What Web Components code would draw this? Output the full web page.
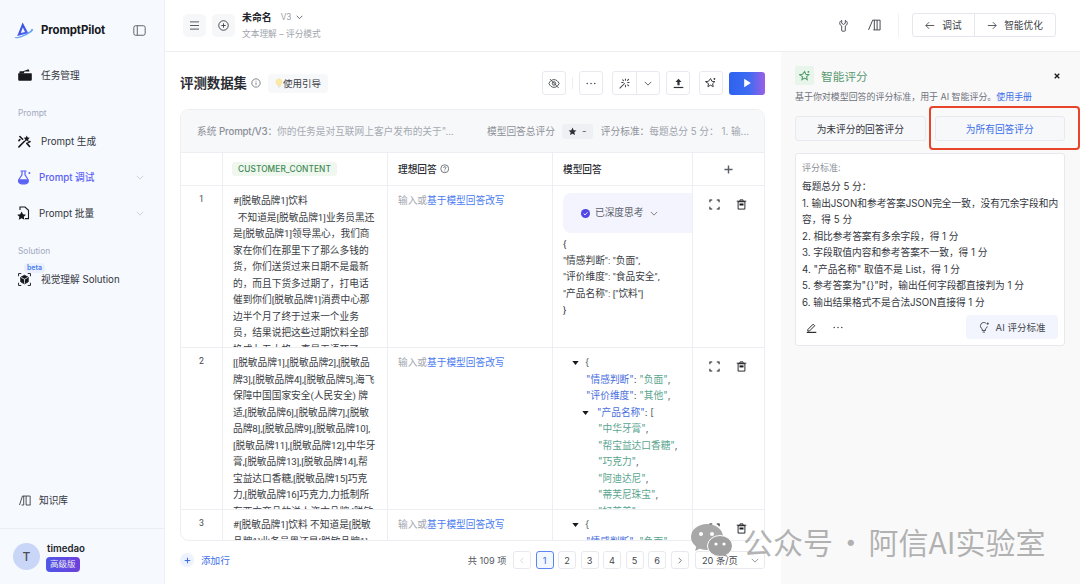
<!DOCTYPE html>
<html lang="zh"><head><meta charset="utf-8"><title>PromptPilot</title>
<style>
html,body{margin:0;padding:0;width:1080px;height:584px;overflow:hidden;background:#fff;font-family:Inter,"Noto Sans CJK SC",sans-serif;font-size:9.7px;color:#33363d}
</style></head><body><pp-app></pp-app>
<script>
const ICONS={
logo:`<svg viewBox="0 0 20 17" width="20" height="17"><defs><linearGradient id="lg" x1="0" y1="0" x2="1" y2="1"><stop offset="0" stop-color="#2b45d6"/><stop offset="1" stop-color="#5a6cf2"/></linearGradient></defs><path d="M8.600 .6 14.400 11.200 3.200 14Z" fill="url(#lg)"/><path d="M8.800 5.600 11 9.900 6.800 10.900Z" fill="#f6f9fe"/><path d="M.8 15.200C.4 16.400 3 16.600 7.400 15.200 12 13.700 17.600 10.600 19 8.200 19.500 7.300 18.600 6.800 17 7 18 7.600 16.800 9 13.400 11 9 13.500 3.400 15.600.8 15.200Z" fill="#62a2f4"/></svg>`,
panel:`<svg viewBox="0 0 14 12" width="13" height="11" fill="none" stroke="#55585f" stroke-width="1"><rect x=".8" y=".8" width="12.4" height="10.4" rx="2"/><path d="M4.600 1v10"/></svg>`,
folder:`<svg viewBox="0 0 14 12" width="14" height="12"><path d="M1.400 4.400V3.200C1.400 2.600 1.800 2.200 2.400 2.200H5L9.800 .4c.5-.2 1 .1 1.200.6l.5 1.400h-5L5.600 4.400Z" fill="#17181c"/><path d="M.5 4.200h12.800c.3 0 .5.2.5.5v5.800c0 .8-.6 1.300-1.300 1.300H1.600c-.8 0-1.400-.6-1.400-1.300V4.500c0-.2.1-.3.3-.3Z" fill="#17181c"/></svg>`,
wand:`<svg viewBox="0 0 14 14" width="13" height="13"><path d="M9.400.6l1 2.100 2.300.3-1.700 1.600.4 2.300-2-1.100-2 1.100.4-2.300L6.100 3l2.300-.3Z" fill="#17181c"/><path d="M1 12.800 7 6.700M2 1.600l3 3M9.500 9l3 3.300M2 5l-1 1M11 8l2-1" stroke="#17181c" stroke-width="1.700" fill="none" stroke-linecap="round"/></svg>`,
flask:`<svg viewBox="0 0 14 15" width="14" height="15"><path d="M4 1h5M5 1v3.800L1.900 9.500C.9 11.300 2 13.800 4.300 13.800h4.300c2.300 0 3.400-2.500 2.400-4.300L8 4.800V1" fill="none" stroke="#5b62f4" stroke-width="1.200" stroke-linecap="round"/><path d="M1.900 9.300h9.100c.8 2-.4 4.500-2.400 4.500H4.300C2.300 13.800 1.100 11.300 1.900 9.300Z" fill="#5b62f4"/><circle cx="12.400" cy="3" r="1" fill="#5b62f4"/></svg>`,
filestar:`<svg viewBox="0 0 13 14" width="13" height="14"><path d="M3 4V1h5l3.500 3.300V12.600H8" fill="none" stroke="#17181c" stroke-width="1.100"/><path d="M4.600 5.500l1.400 2.800 3 .4-2.200 2.100.6 3-2.800-1.500-2.800 1.500.6-3L.2 8.700l3-.4Z" fill="#17181c"/></svg>`,
cube:`<svg viewBox="0 0 14 14" width="13" height="13" fill="none" stroke="#17181c" stroke-width="1"><path d="M.6 3.500V.6H3.500M10.500.6h2.900v2.900M13.400 10.500v2.900h-2.900M3.500 13.400H.6v-2.900"/><path d="M7 2.500 11 4.500v5L7 11.700 3 9.500v-5Z" fill="#17181c"/><path d="M3.300 4.700 7 6.700l3.700-2M7 6.700v4.800" stroke="#fff" stroke-width=".8"/></svg>`,
book:`<svg viewBox="0 0 14 12" width="12" height="11" fill="none" stroke="#33363d" stroke-width="1"><path d="M.6 11.300 4 .8h9v10.500M5.500 .8v10.500M8.300 .8v10.500M3 11.300h2.500M8.300 11.300h5"/></svg>`,
menu:`<svg viewBox="0 0 12 10" width="11" height="9" fill="none" stroke="#55585f" stroke-width="1.100"><path d="M1 1h10M1 5h10M1 9h10"/></svg>`,
pluscircle:`<svg viewBox="0 0 12 12" width="11" height="11" fill="none" stroke="#3c3f46" stroke-width="1"><circle cx="6" cy="6" r="5.200"/><path d="M3.600 6h4.800M6 3.600v4.800"/></svg>`,
chev:`<svg viewBox="0 0 10 6" width="7" height="4.500" fill="none" stroke="currentColor" stroke-width="1.200"><path d="M1 1l4 4 4-4"/></svg>`,
chevb:`<svg viewBox="0 0 10 6" width="8" height="5" fill="none" stroke="currentColor" stroke-width="1"><path d="M1 1l4 4 4-4"/></svg>`,
info:`<svg viewBox="0 0 12 12" width="10" height="10" fill="none" stroke="#6b6f78" stroke-width="1"><circle cx="6" cy="6" r="5"/><path d="M6 5.300v3.200M6 3.300v1"/></svg>`,
help:`<svg viewBox="0 0 12 12" width="9.500" height="9.500" fill="none" stroke="#55585f" stroke-width="1"><circle cx="6" cy="6" r="5"/><path d="M4.500 4.800C4.500 3 7.600 3 7.600 4.800c0 1.200-1.600 1.200-1.600 2.400M6 8.300v1"/></svg>`,
bulb:`<svg viewBox="0 0 10 12" width="8" height="12"><path d="M5 .8a3.800 3.800 0 0 0-2 7v1.200h4V7.800A3.800 3.800 0 0 0 5 .8Z" fill="#fbe9a6" stroke="#f5dc85" stroke-width=".6"/><path d="M3.500 10.300h3L5.600 11.500H4.400Z" fill="#d8d8d8"/></svg>`,
eyeoff:`<svg viewBox="0 0 14 12" width="12" height="11" fill="none" stroke="#3c3f46" stroke-width="1"><path d="M1 6c1.500-3 3.500-4.500 6-4.500S11.500 3 13 6c-1.500 3-3.500 4.500-6 4.500S2.500 9 1 6Z"/><circle cx="7" cy="6" r="2"/><path d="M2.200 .8 12.400 11.200"/></svg>`,
dots:`<svg viewBox="0 0 12 3" width="10" height="3" fill="#3c3f46"><circle cx="1.500" cy="1.500" r=".9"/><circle cx="6" cy="1.500" r=".9"/><circle cx="10.500" cy="1.500" r=".9"/></svg>`,
magic:`<svg viewBox="0 0 12 12" width="11" height="11" fill="none" stroke="#3c3f46" stroke-width="1.100"><path d="M1 11 6 6M7 1v1.500M7 8v1.500M3 5h1.500M9.500 5H11M4 2l1 1M9.500 7.500l1 1M10.500 1.500 9.300 2.700" stroke-linecap="round"/></svg>`,
upload:`<svg viewBox="0 0 12 12" width="11" height="11" fill="#2e3037"><path d="M6 .8 9.300 4.300H7.200V8H4.800V4.300H2.700Z"/><rect x=".8" y="9.700" width="10.400" height="1.300"/></svg>`,
star:`<svg viewBox="0 0 14 14" width="12" height="12" fill="none" stroke="#2e3037" stroke-width="1.100"><path d="M6.500 1.800 8 5l3.500.4-2.600 2.400.7 3.500-3.100-1.800-3.100 1.800.7-3.500L.6 5.400 4.100 5Z"/><path d="M11 1.200v2M10 2.200h2"/></svg>`,
starg:`<svg viewBox="0 0 14 14" width="12" height="12" fill="none" stroke="#4f9a6a" stroke-width="1.200"><path d="M6.500 1.800 8 5l3.500.4-2.600 2.400.7 3.500-3.100-1.800-3.100 1.800.7-3.500L.6 5.400 4.100 5Z"/><path d="M11 1.200v2M10 2.200h2"/></svg>`,
starfill:`<svg viewBox="0 0 12 12" width="9" height="9" fill="#2e3037"><path d="M6 .8 7.600 4.200l3.700.4-2.800 2.500.8 3.700L6 9l-3.300 1.800.8-3.700L.7 4.600l3.700-.4Z"/></svg>`,
play:`<svg viewBox="0 0 10 12" width="9" height="10" fill="#fff"><path d="M1 1l8 5-8 5Z"/></svg>`,
key:`<svg viewBox="0 0 10 14" width="9" height="13" fill="none" stroke="#3c3f46" stroke-width="1"><path d="M3 1.300C1.500 2 .8 3.200 .8 4.400c0 1.500 1 2.600 2.200 3.100v5.200c0 .4.300.6.600.6h2.800c.3 0 .6-.2.600-.6V7.500c1.200-.5 2.200-1.600 2.200-3.100C9.200 3.200 8.500 2 7 1.300V4.500L5 5.800 3 4.500Z"/></svg>`,
book2:`<svg viewBox="0 0 14 12" width="13" height="12" fill="none" stroke="#3c3f46" stroke-width="1"><path d="M.6 11.300 5 .8h8v10.500H5.800M6.800 .8v10.500M9.800 .8v10.500"/></svg>`,
left:`<svg viewBox="0 0 12 10" width="10" height="9" fill="none" stroke="#3c3f46" stroke-width="1"><path d="M11 5H1M5 1 1 5l4 4"/></svg>`,
right:`<svg viewBox="0 0 12 10" width="10" height="9" fill="none" stroke="#3c3f46" stroke-width="1"><path d="M1 5h10M7 1l4 4-4 4"/></svg>`,
close:`<svg viewBox="0 0 8 8" width="6" height="6" fill="none" stroke="#17181c" stroke-width="1.800"><path d="M1 1l6 6M7 1 1 7"/></svg>`,
edit:`<svg viewBox="0 0 12 12" width="11" height="11" fill="none" stroke="#17181c" stroke-width="1"><path d="M2 8.200 7.800 2.400l1.700 1.700-5.800 5.800H2Z"/><path d="M.8 11.300h10.400" stroke-width="1.200"/></svg>`,
bulbai:`<svg viewBox="0 0 12 12" width="11" height="11" fill="none" stroke="#3c3f46" stroke-width="1"><path d="M7.500 1.300A3.700 3.700 0 1 0 3.500 7.500V9.300H7V7.500A3.700 3.700 0 0 0 9 4.800M4 11h2.500"/><path d="M9.500 .6v2.400M8.300 1.800h2.400"/></svg>`,
full:`<svg viewBox="0 0 12 12" width="11" height="11" fill="none" stroke="#17181c" stroke-width="1.100"><path d="M1 3.500V1h2.500M8.500 1H11v2.500M11 8.500V11H8.500M3.500 11H1V8.500"/></svg>`,
trash:`<svg viewBox="0 0 12 12" width="11" height="11"><path d="M.8 2.400h10.400M4.300 2V1h3.400v1" fill="none" stroke="#17181c" stroke-width="1"/><path d="M2.300 3h7.400v8H2.300Z" fill="none" stroke="#17181c" stroke-width="1"/><path d="M3.800 4.800h4.400V7H3.800Z" fill="#17181c"/></svg>`,
plus:`<svg viewBox="0 0 10 10" width="9" height="9" fill="none" stroke="#5c5f66" stroke-width="1.600"><path d="M5 .5v9M.5 5h9"/></svg>`,
plusb:`<svg viewBox="0 0 10 10" width="7" height="7" fill="none" stroke="#3d6fe8" stroke-width="1.500"><path d="M5 1v8M1 5h8"/></svg>`,
check:`<svg viewBox="0 0 10 10" width="9" height="9"><circle cx="5" cy="5" r="5" fill="#4f46e5"/><path d="M3 5.200 4.500 6.600 7.200 3.600" fill="none" stroke="#fff" stroke-width="1"/></svg>`,
tri:`<svg viewBox="0 0 8 5" width="7" height="4" fill="#17181c"><path d="M0 0h8L4 5Z"/></svg>`,
prev:`<svg viewBox="0 0 6 10" width="4" height="7" fill="none" stroke="#c4c6cc" stroke-width="1"><path d="M5 1 1 5l4 4"/></svg>`,
next:`<svg viewBox="0 0 6 10" width="4" height="7" fill="none" stroke="#3c3f46" stroke-width="1"><path d="M1 1l4 4-4 4"/></svg>`
};
function def(name,html,init){
  const t=document.createElement('template');t.innerHTML=html;
  customElements.define(name,class extends HTMLElement{
    constructor(){super();this.attachShadow({mode:'open'}).appendChild(t.content.cloneNode(true));}
    connectedCallback(){if(init)init(this);}
  });
}
def('pp-icon',`<style>:host{display:inline-flex;align-items:center;justify-content:center;flex:none;line-height:0}svg{display:block}</style><span id="i" style="display:contents"></span>`,
  el=>{el.shadowRoot.getElementById('i').innerHTML=ICONS[el.getAttribute('name')]||'';});

def('pp-nav-item',`<style>
:host{display:flex;align-items:center;height:36px;padding-left:18px;position:relative;font-size:9.7px;color:#33363d}
.ic{width:23px;display:flex;align-items:center;flex:none}
.ch{margin-left:auto;margin-right:20px;color:#c5c8d0;display:flex}
:host([sub]){padding-left:17px}:host([sub]) .ic{width:22px}
:host([active]){color:#5b62f4;font-weight:500}
</style><span class="ic"><slot name="icon"></slot></span><slot></slot><span class="ch"><slot name="chev"></slot></span>`);

def('pp-group-label',`<style>:host{display:flex;align-items:center;height:20px;margin-top:10px;padding-left:18px;font-size:8.4px;color:#a1a8bd}</style><slot></slot>`);

def('pp-sidebar',`<style>
:host{display:flex;flex-direction:column;width:164px;height:584px;flex:none;background:#f6f9fe;border-right:1px solid #eceef3;box-sizing:content-box}
.head{height:57px;display:flex;align-items:center;padding:3px 18px 0 14px;box-sizing:border-box}
.brand{font-weight:700;font-size:11.4px;color:#17181c;margin-left:7px;letter-spacing:-.1px}
.sp{flex:1}
.user{height:56px;border-top:1px solid #eceef3;display:flex;align-items:center;padding-left:13px;box-sizing:border-box;margin-top:10px}
.av{width:27px;height:27px;border-radius:50%;background:#c9d6f7;color:#4a4d55;display:flex;align-items:center;justify-content:center;font-size:12px;font-weight:500}
.ut{margin-left:6px;display:flex;flex-direction:column;align-items:flex-start;gap:2px}
.un{font-weight:600;font-size:9.700px;color:#22242a;line-height:13px;margin-left:1px}
.bd{background:linear-gradient(90deg,#4f56e8,#6d3fdc);color:#eee;font-size:8.500px;border-radius:4px;line-height:15px;padding:0 4px;height:15px}
</style>
<div class="head"><pp-icon name="logo"></pp-icon><span class="brand">PromptPilot</span><span class="sp"></span><pp-icon name="panel"></pp-icon></div>
<pp-nav-item><pp-icon slot="icon" name="folder"></pp-icon>任务管理</pp-nav-item>
<pp-group-label>Prompt</pp-group-label>
<pp-nav-item><pp-icon slot="icon" name="wand"></pp-icon>Prompt 生成</pp-nav-item>
<pp-nav-item sub active><pp-icon slot="icon" name="flask"></pp-icon>Prompt 调试<pp-icon slot="chev" name="chevb"></pp-icon></pp-nav-item>
<pp-nav-item sub><pp-icon slot="icon" name="filestar"></pp-icon>Prompt 批量<pp-icon slot="chev" name="chevb"></pp-icon></pp-nav-item>
<pp-group-label>Solution</pp-group-label>
<pp-nav-item><pp-icon slot="icon" name="cube"></pp-icon><span style="position:absolute;left:24px;top:2px;height:10px;line-height:10px;padding:0 3px;border-radius:4px;background:#e9effd;color:#4a7cf0;font-size:7px;font-weight:600">beta</span>视觉理解 Solution</pp-nav-item>
<span class="sp"></span>
<pp-nav-item sub><pp-icon slot="icon" name="book" style="margin-left:2px"></pp-icon>知识库</pp-nav-item>
<div class="user"><div class="av">T</div><div class="ut"><span class="un">timedao</span><span class="bd">高级版</span></div></div>`);

def('pp-tool-btn',`<style>
:host{display:inline-flex;align-items:center;justify-content:center;width:24px;height:24px;box-sizing:border-box;border:1px solid #e8e9ee;border-bottom-width:1.500px;border-radius:3px;background:#fff;flex:none}
</style><slot></slot>`);

def('pp-topbar',`<style>
:host{display:flex;align-items:center;height:52px;box-sizing:border-box;border-bottom:1px solid #eceef2;padding:0 24px 1px 18px;background:#fff}
.sq{width:23px;height:23px;border-radius:5px;background:#f6f7f9;display:flex;align-items:center;justify-content:center;margin-right:6px}
.tt{display:flex;flex-direction:column;gap:4px}
.r1{display:flex;align-items:center;line-height:14px}
.nm{font-weight:600;font-size:9.900px;color:#22242a}
.v{color:#9b9fa8;font-size:8.300px;margin-left:9px}
.c{color:#4a4d55;margin-left:4px;display:flex}
.r2{font-size:8.700px;color:#a0a4ac;line-height:12px}
.sp{flex:1}
.sep{width:1px;height:24px;background:#f0f1f3;margin:0 13px 0 7px}
.grp{display:flex;height:24px;border:1px solid #e6e7ec;border-radius:3px;box-sizing:border-box;font-size:9.700px;color:#3c3f46}
.g{display:flex;align-items:center;gap:7px;justify-content:center;height:100%;box-sizing:border-box}
.g1{width:62px;border-right:1px solid #e6e7ec}.g2{width:80px}
</style>
<div class="sq"><pp-icon name="menu"></pp-icon></div><div class="sq" style="margin-right:7px"><pp-icon name="pluscircle"></pp-icon></div>
<div class="tt"><div class="r1"><span class="nm">未命名</span><span class="v">V3</span><span class="c"><pp-icon name="chev"></pp-icon></span></div><div class="r2">文本理解 – 评分模式</div></div>
<span class="sp"></span>
<pp-icon name="key" style="margin-right:20px"></pp-icon><pp-icon name="book2" style="margin-right:10px"></pp-icon><span class="sep"></span>
<div class="grp"><div class="g g1"><pp-icon name="left"></pp-icon>调试</div><div class="g g2"><pp-icon name="right"></pp-icon>智能优化</div></div>`);

def('pp-title-row',`<style>
:host{display:flex;align-items:center;height:24px;margin-top:19px}
h2{margin:0;font-size:13.400px;font-weight:600;color:#2a2c32;line-height:24px}
.gd{margin-left:7px;height:19px;width:60px;background:#f7f8fa;border-radius:4px;display:flex;align-items:center;justify-content:center;font-size:9.500px;color:#3c3f46;box-sizing:border-box}
.sp{flex:1}.sep{width:1px;height:12px;background:#eceef2;margin:0 6px}
.grp{display:flex;width:48px;height:24px;border:1px solid #e8e9ee;border-bottom-width:1.500px;border-radius:3px;box-sizing:border-box;margin:0 6px 0 9px}
.grp span{flex:1;display:flex;align-items:center;justify-content:center;color:#3c3f46}
.grp span:first-child{border-right:1px solid #e8e9ee}
.play{width:36px;height:23px;border-radius:3px;background:linear-gradient(90deg,#2f62f0 0%,#3d6cf2 55%,#9a5fe6 100%);display:flex;align-items:center;justify-content:center;margin-left:6px}
</style>
<h2>评测数据集</h2><pp-icon name="info" style="margin-left:4px"></pp-icon>
<div class="gd"><pp-icon name="bulb"></pp-icon>使用引导</div>
<span class="sp"></span>
<pp-tool-btn><pp-icon name="eyeoff"></pp-icon></pp-tool-btn><span class="sep"></span>
<pp-tool-btn><pp-icon name="dots"></pp-icon></pp-tool-btn>
<div class="grp"><span><pp-icon name="magic"></pp-icon></span><span><pp-icon name="chevb"></pp-icon></span></div>
<pp-tool-btn><pp-icon name="upload"></pp-icon></pp-tool-btn>
<pp-tool-btn style="margin-left:9px"><pp-icon name="star"></pp-icon></pp-tool-btn>
<div class="play"><pp-icon name="play"></pp-icon></div>`);

def('pp-table-head',`<style>
:host{display:flex;align-items:center;height:43px;flex:none;box-sizing:border-box;background:#f7f8fa;border-bottom:1px solid #eceef2;padding:0 15px 0 16px;font-size:9.700px;color:#8d9199;white-space:nowrap}
b{font-weight:500;color:#8a8e96;letter-spacing:-.2px}.v{color:#a6aab2}
.r{margin-left:auto;display:flex;align-items:center}
.chip{margin:0 8px 0 7px;width:31px;height:15px;border-radius:3px;background:#eff0f3;display:flex;align-items:center;justify-content:center;gap:5px;color:#555}
.s{color:#a0a4ac}
</style>
<span>系统 <b>Prompt/V3</b>：<span class="v">你的任务是对互联网上客户发布的关于"...</span></span>
<div class="r"><span>模型回答总评分</span><span class="chip"><pp-icon name="starfill"></pp-icon>-</span><span>评分标准：<span class="s">每题总分 5 分： 1. 输...</span></span></div>`);

const COLS='grid-template-columns:42px 165px 165px 140px 1fr;';
def('pp-col-head',`<style>
:host{display:grid;${COLS}height:33px;flex:none;box-sizing:border-box;border-bottom:1px solid #eceef2;font-weight:500;font-size:9.700px;color:#2a2c32}
div{border-right:1px solid #eceef2;display:flex;align-items:center;padding-left:10px;box-sizing:border-box}
div:last-child{border:0;padding:0;justify-content:center}
.tag{background:#eff7ef;color:#3f8a55;font-size:8.300px;font-weight:500;height:14px;line-height:14px;padding:0 6px;border-radius:3px;letter-spacing:.1px;margin-left:-1px}
</style><div></div><div><span class="tag">CUSTOMER_CONTENT</span></div><div>理想回答<pp-icon name="help" style="margin-left:3px"></pp-icon></div><div>模型回答</div><div><pp-icon name="plus"></pp-icon></div>`);

def('pp-row',`<style>
:host{display:grid;${COLS}height:162px;flex:none;box-sizing:border-box;border-bottom:1px solid #eceef2;line-height:16.500px;font-size:9.700px;color:#3a3d44;font-family:Roboto,"Noto Sans CJK SC",sans-serif}
:host(:last-child){border:0}
.c{border-right:1px solid #eceef2;overflow:hidden;padding-top:7px;box-sizing:border-box;white-space:nowrap}
.n{text-align:center;font-size:8.800px;color:#44474e;padding-top:5px}
.t{padding-left:10px}
.ideal{padding-left:10px;color:#a3a7af}.ideal a{color:#4a7cf0}
.m{padding-left:10px}
.a{border:0;display:flex;justify-content:center;gap:16px;padding-top:13px;align-items:flex-start;margin-left:-1px}
</style>
<div class="c n"><slot name="n"></slot></div>
<div class="c t"><slot name="text"></slot></div>
<div class="c ideal">输入或<a>基于模型回答改写</a></div>
<div class="c m"><slot name="model"></slot></div>
<div class="c a"><pp-icon name="full"></pp-icon><pp-icon name="trash"></pp-icon></div>`);

def('pp-thinking',`<style>
:host{display:flex;align-items:center;width:180px;height:40px;border-radius:8px;background:#f3f4fe;padding-left:18px;box-sizing:border-box;margin-bottom:3px;color:#5a5e68;gap:5px;font-size:9.700px}
.c{color:#666;margin-left:2px;display:flex}
</style><pp-icon name="check"></pp-icon><slot></slot><span class="c"><pp-icon name="chevb"></pp-icon></span>`);

def('pp-json',`<style>
:host{display:block;font-family:Inter,"Noto Sans CJK SC",sans-serif;color:#555860}
</style><slot></slot>`);

const l=(c,h)=>`<div style="display:flex;align-items:center;height:16.500px;${c}">${h}</div>`;
const k=s=>`<span style="color:#4a6fe0">${s}</span>`, g=s=>`<span style="color:#5aa58f">${s}</span>`;
const tri=`<pp-icon name="tri" style="width:13px;justify-content:flex-start"></pp-icon>`;
const J2=l('padding-left:9px',tri+'{')+l('padding-left:23px',k('"情感判断"')+':&nbsp;'+g('"负面"')+',')+l('padding-left:23px',k('"评价维度"')+':&nbsp;'+g('"其他"')+',')
 +l('padding-left:19px',tri+'<span style="margin-left:2px"></span>'+k('"产品名称"')+':&nbsp;[')+['中华牙膏','帮宝益达口香糖','巧克力','阿迪达尼','蒂芙尼珠宝','好莱美'].map(s=>l('padding-left:35px',g('"'+s+'"')+',')).join('');
const J3=l('padding-left:9px',tri+'{')+l('padding-left:23px',k('"情感判断"')+':&nbsp;'+g('"负面"')+',');

def('pp-table',`<style>
:host{display:flex;flex-direction:column;width:585px;height:432px;box-sizing:border-box;border:1px solid #eceef2;border-radius:9px;overflow:hidden;margin-top:14px;flex:none;background:#fff}
</style><pp-table-head></pp-table-head><pp-col-head></pp-col-head>
<pp-row><span slot="n">1</span><div slot="text">#[脱敏品牌1]饮料<br>&nbsp;&nbsp;不知道是[脱敏品牌1]业务员黑还<br>是[脱敏品牌1]领导黑心，我们商<br>家在你们在那里下了那么多钱的<br>货，你们送货过来日期不是最新<br>的，而且下货多过期了，打电话<br>催到你们[脱敏品牌1]消费中心那<br>边半个月了终于过来一个业务<br>员，结果说把这些过期饮料全部<br>换成九五大格，真是无语死了</div>
<div slot="model"><pp-thinking>已深度思考</pp-thinking><div>{<br>"情感判断": "负面",<br>"评价维度": "食品安全",<br>"产品名称": ["饮料"]<br>}</div></div></pp-row>
<pp-row><span slot="n">2</span><div slot="text">[[脱敏品牌1],[脱敏品牌2],[脱敏品<br>牌3],[脱敏品牌4],[脱敏品牌5],海飞<br>保障中国国家安全(人民安全) 牌<br>适,[脱敏品牌6],[脱敏品牌7],[脱敏<br>品牌8],[脱敏品牌9],[脱敏品牌10],<br>[脱敏品牌11],[脱敏品牌12],中华牙<br>膏,[脱敏品牌13],[脱敏品牌14],帮<br>宝益达口香糖,[脱敏品牌15]巧克<br>力,[脱敏品牌16]巧克力,力抵制所<br>有西方商品的洋人资本品牌,[脱敏</div>
<pp-json slot="model">${J2}</pp-json></pp-row>
<pp-row><span slot="n">3</span><div slot="text">#[脱敏品牌1]饮料 不知道是[脱敏<br>品牌1]业务员黑还是[脱敏品牌1]</div>
<pp-json slot="model">${J3}</pp-json></pp-row>`);

def('pp-page-btn',`<style>
:host{display:inline-flex;width:18px;height:18px;box-sizing:border-box;align-items:center;justify-content:center;border:1px solid #e8e9ee;border-radius:3px;font-size:9.200px;color:#44474e;background:#fff;flex:none}
:host([on]){border-color:#5b86ee;color:#3d6fe8;background:#f3f7ff}
</style><slot></slot>`);

def('pp-footer',`<style>
:host{display:flex;align-items:center;height:38px;font-size:9.200px;color:#55585f;flex:none}
.add{display:flex;align-items:center;color:#3d6fe8;font-size:9.600px}
.o{width:14px;height:14px;border-radius:50%;background:#eef2fe;display:flex;align-items:center;justify-content:center;margin-right:7px}
.sp{flex:1}.p{display:flex;align-items:center;gap:4.500px}
.tot{margin-right:2px;white-space:nowrap}
.sel{margin-left:2px;width:70px;height:18px;border:1px solid #e8e9ee;border-radius:3px;box-sizing:border-box;display:flex;align-items:center;justify-content:space-between;padding:0 5px 0 6px;color:#44474e;white-space:nowrap}
.sel span{display:flex;color:#7a7d85}
</style><div class="add"><div class="o"><pp-icon name="plusb"></pp-icon></div>添加行</div><span class="sp"></span>
<div class="p"><span class="tot">共 109 项</span><pp-page-btn><pp-icon name="prev"></pp-icon></pp-page-btn><pp-page-btn on>1</pp-page-btn><pp-page-btn>2</pp-page-btn><pp-page-btn>3</pp-page-btn><pp-page-btn>4</pp-page-btn><pp-page-btn>5</pp-page-btn><pp-page-btn>6</pp-page-btn><pp-page-btn><pp-icon name="next"></pp-icon></pp-page-btn><div class="sel">20 条/页<span><pp-icon name="chevb"></pp-icon></span></div></div>`);

def('pp-panel',`<style>
:host{display:flex;flex-direction:column;width:299px;flex:none;background:#f9f9fa;padding:14px 15px 0 14px;box-sizing:border-box;position:relative}
.h{display:flex;align-items:center;height:19px}
.ic{width:19px;height:19px;border-radius:2px;background:#e8f5ea;display:flex;align-items:center;justify-content:center}
.t{margin-left:7px;font-size:11.700px;color:#5a9a70}
.x{margin-left:auto;margin-right:5px}
.d{font-size:8.950px;color:#6e727a;line-height:12px;margin-top:6px;white-space:nowrap}
.d a{color:#3d6fe8}
.b{display:flex;gap:9px;margin-top:13px}
.btn{flex:1;height:25px;display:flex;align-items:center;justify-content:center;border:1px solid #e8e9ee;border-radius:3px;background:#f7f8fa;font-size:9.700px;color:#33363d;box-sizing:border-box}
.btn.on{color:#3d6fe8}
.red{position:absolute;left:148px;top:54px;width:151px;height:44px;box-sizing:border-box;border:2px solid #e6452c;border-radius:4px}
.card{margin-top:12px;height:193px;background:#fff;border:1px solid #e8e9ee;border-radius:3px;box-sizing:border-box;padding:7px 6px 0 6px;display:flex;flex-direction:column}
.l{font-size:9px;color:#8d9199;line-height:13px;margin-bottom:5px}
.tx{line-height:16.500px;font-size:9.700px;color:#33363d;white-space:nowrap}
.f{display:flex;align-items:center;margin-top:4px;padding-left:4px}
.ai{margin-left:auto;width:92px;height:24px;border-radius:4px;background:#f2f5fd;display:flex;align-items:center;justify-content:center;gap:6px;color:#44474e;font-size:9.500px}
</style>
<div class="h"><div class="ic"><pp-icon name="starg"></pp-icon></div><span class="t">智能评分</span><pp-icon class="x" name="close"></pp-icon></div>
<div class="d">基于你对模型回答的评分标准，用于 AI 智能评分。<a>使用手册</a></div>
<div class="b"><div class="btn">为未评分的回答评分</div><div class="btn on">为所有回答评分</div></div>
<div class="red"></div>
<div class="card"><div class="l">评分标准:</div><div class="tx">每题总分 5 分：<br>1. 输出JSON和参考答案JSON完全一致，没有冗余字段和内<br>容，得 5 分<br>2. 相比参考答案有多余字段，得 1 分<br>3. 字段取值内容和参考答案不一致，得 1 分<br>4. "产品名称" 取值不是 List，得 1 分<br>5. 参考答案为"{}"时，输出任何字段都直接判为 1 分<br>6. 输出结果格式不是合法JSON直接得 1 分</div>
<div class="f"><pp-icon name="edit"></pp-icon><pp-icon name="dots" style="margin-left:16px"></pp-icon><div class="ai"><pp-icon name="bulbai"></pp-icon>AI 评分标准</div></div></div>`);

def('pp-watermark',`<style>
:host{position:absolute;left:691px;top:520px;display:flex;align-items:center;height:42px;pointer-events:none;color:rgba(105,105,105,.5);font-size:30px;white-space:nowrap;font-family:"Noto Sans CJK SC",sans-serif;line-height:42px}
span{margin-left:11px;word-spacing:-4px}
</style><svg width="41" height="34" viewBox="0 0 41 34"><ellipse cx="16" cy="13" rx="16" ry="13" fill="#a8a8a8"/><path d="M6 20 4 27l8-4Z" fill="#a8a8a8"/><circle cx="10" cy="10" r="2" fill="#fff"/><circle cx="21" cy="10" r="2" fill="#fff"/><ellipse cx="29" cy="22" rx="12.500" ry="10.500" fill="#a0a0a0" stroke="#fff" stroke-width="1"/><path d="M34 29l3 4-7-2Z" fill="#a0a0a0"/><circle cx="25" cy="20" r="1.600" fill="#fff"/><circle cx="33" cy="20" r="1.600" fill="#fff"/></svg><span>公众号 · 阿信AI实验室</span>`);

def('pp-app',`<style>
:host{display:flex;width:1080px;height:584px;position:relative;overflow:hidden}
.main{flex:1;display:flex;flex-direction:column;min-width:0}
.body{flex:1;display:flex;min-height:0}
.content{flex:1;display:flex;flex-direction:column;padding:0 16px 0 15px;background:#fff;min-width:0}
</style>
<pp-sidebar></pp-sidebar>
<div class="main"><pp-topbar></pp-topbar><div class="body"><div class="content"><pp-title-row></pp-title-row><pp-table></pp-table><pp-footer></pp-footer></div><pp-panel></pp-panel></div></div>
<pp-watermark></pp-watermark>`);
</script></body></html>
